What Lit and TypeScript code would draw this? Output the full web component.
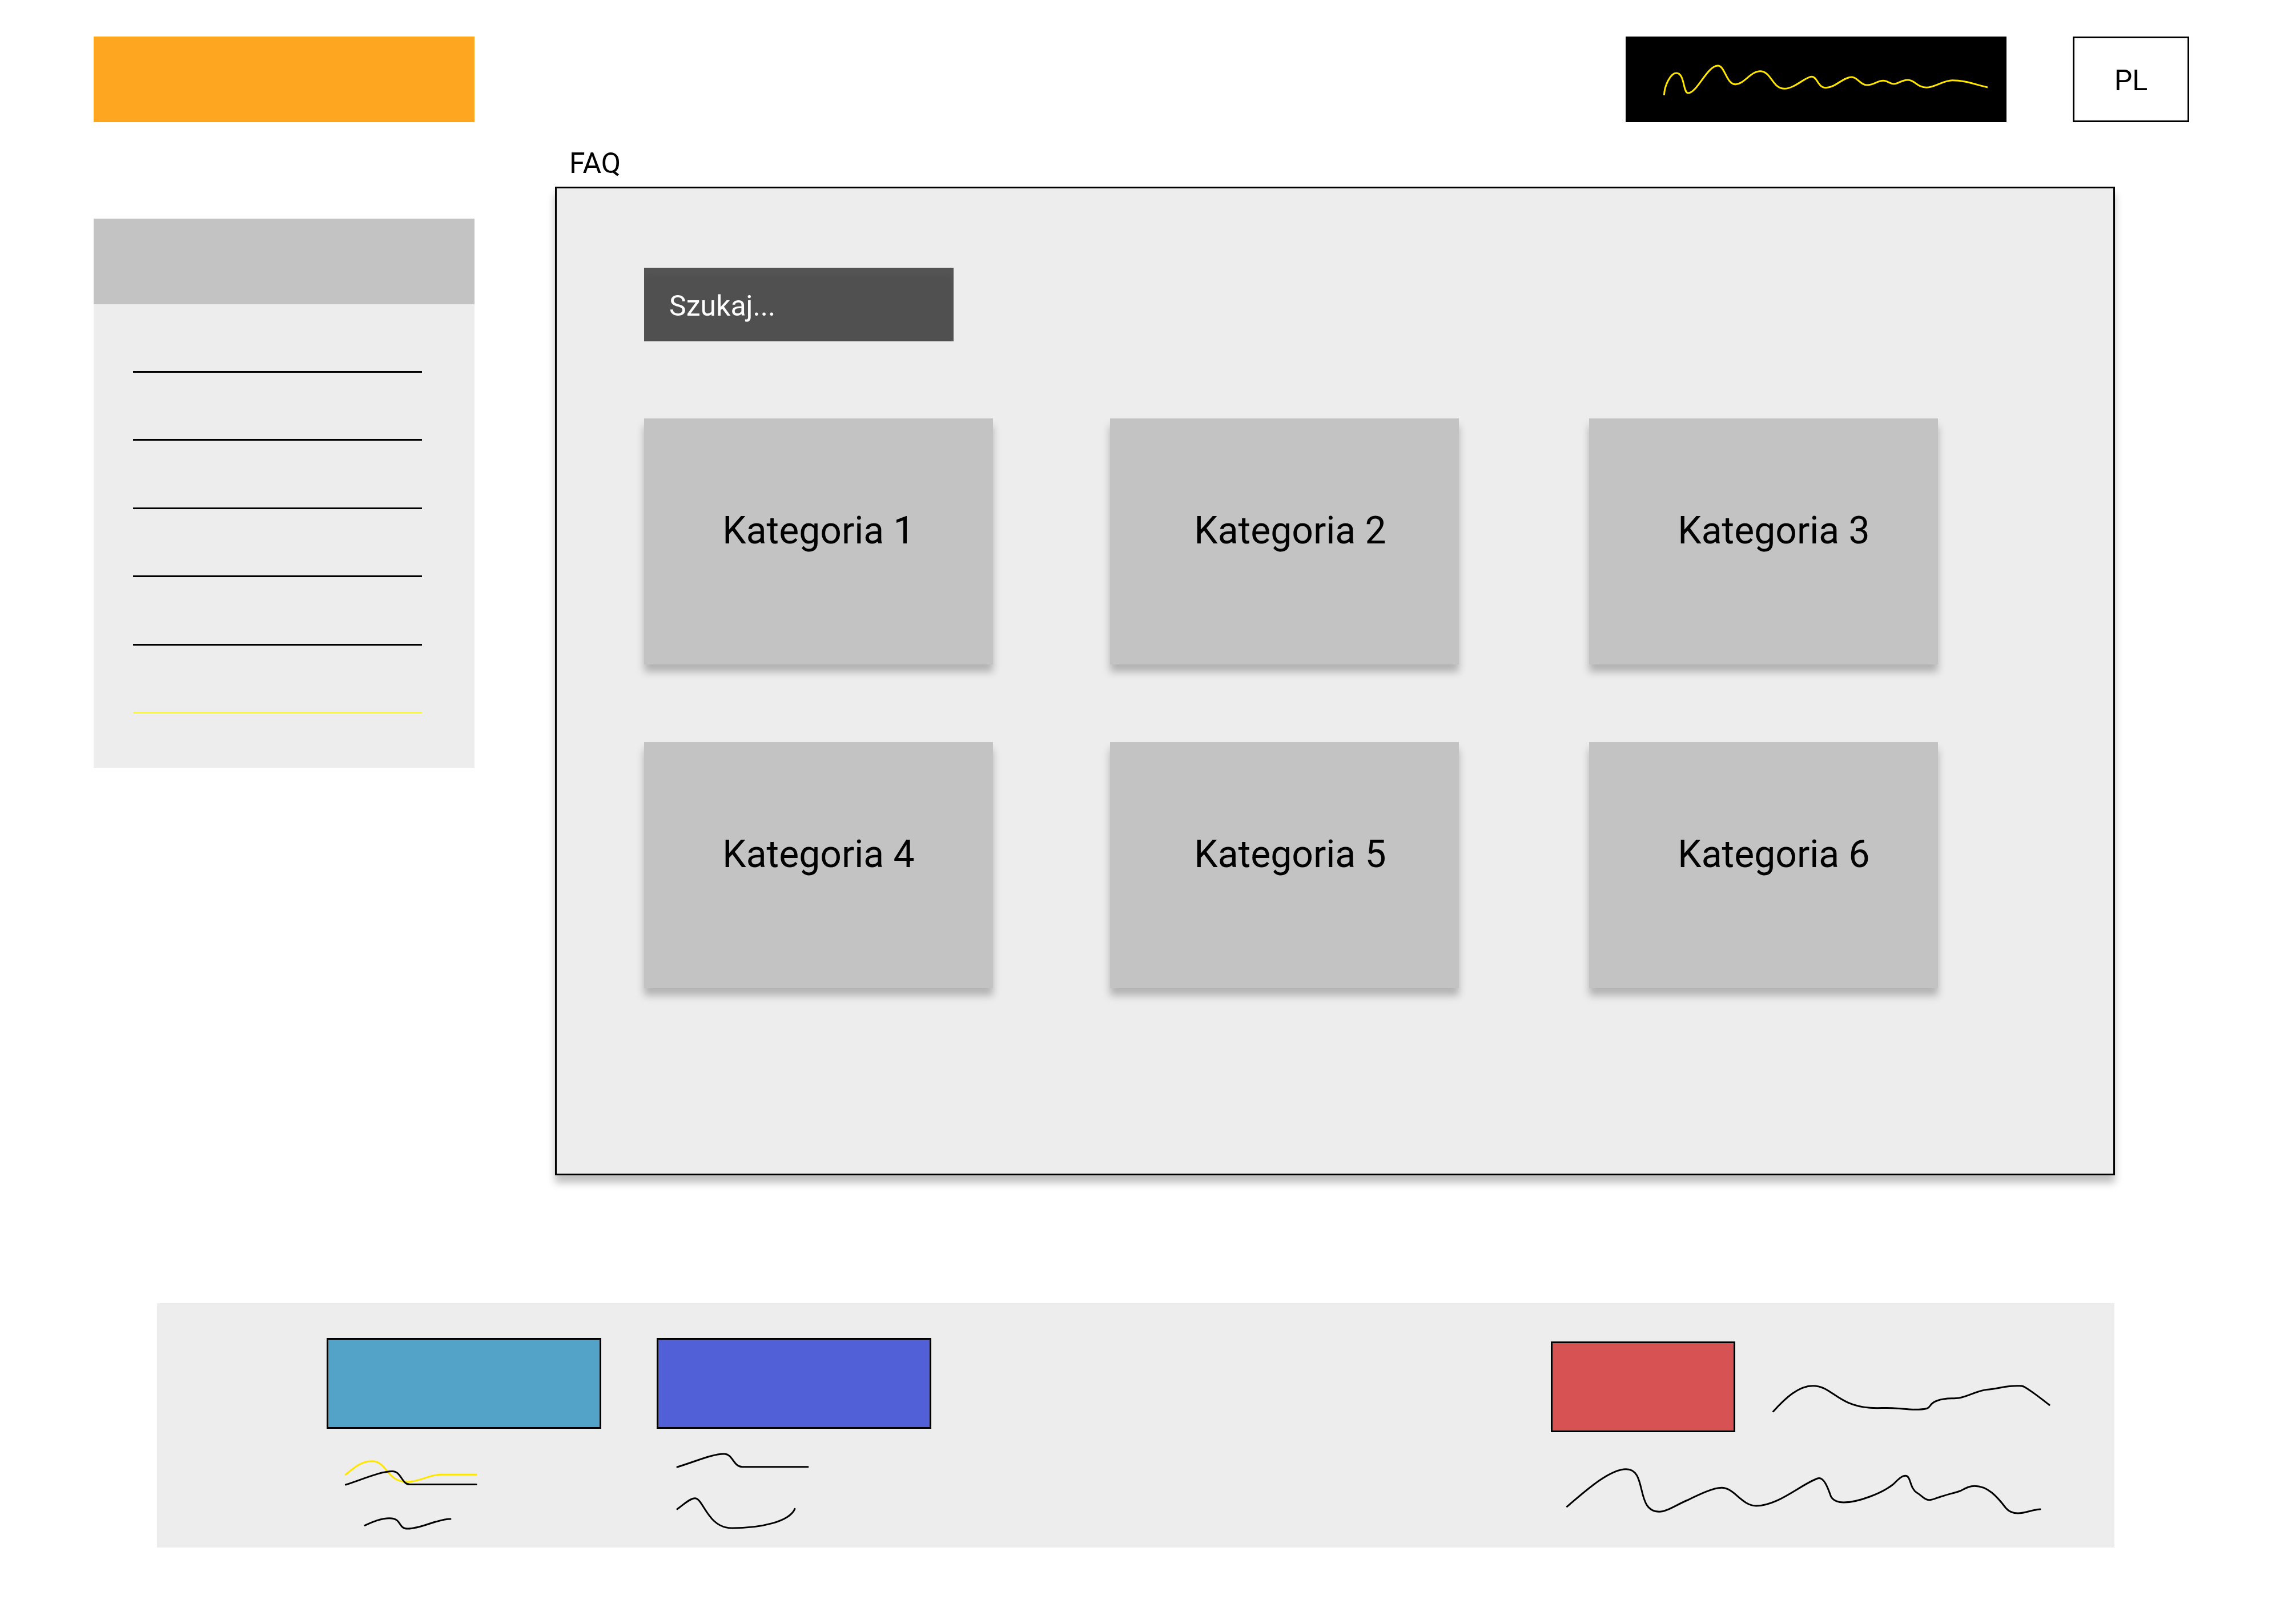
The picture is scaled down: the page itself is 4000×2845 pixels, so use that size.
import { LitElement, html, css } from "lit";
import { customElement, property } from "lit/decorators.js";

/** Top bar: brand block, account button and language switch. */
@customElement("app-header")
class AppHeader extends LitElement {
  static styles = css`
    :host {
      display: block;
    }
    .bar {
      display: flex;
      align-items: stretch;
      gap: 116px;
      height: 150px;
    }
    .brand {
      width: 667px;
      margin-right: auto;
      background: #ffa621;
    }
    .account {
      width: 667px;
      padding: 0;
      border: 0;
      background: #000;
    }
    .account svg {
      display: block;
    }
    .language {
      box-sizing: border-box;
      width: 204px;
      padding: 4px 0 0;
      border: 3px solid #000;
      border-radius: 0;
      background: #fff;
      color: #000;
      font: 400 50px/60px Roboto, sans-serif;
    }
  `;

  render() {
    return html`
      <header class="bar">
        <a class="brand" href="#" aria-label="Logo"></a>
        <button class="account" type="button" aria-label="Konto">
          <svg width="667" height="150" viewBox="0 0 667 150" fill="none" stroke="#ffe600" stroke-width="3">
            <path
              d="M67.4 102.7C68 85 79 64 88.7 64C104 64 100 99 109.6 99C125 99 143 51 161.4 51C174 51 176 83.7 192.5 83.7C207 83.7 219 60.7 235.6 60.7C255 60.7 257 91.3 278 91.3C296 91.3 315 70.3 326 70.3C336 70.3 336 89.7 351 89.7C367 89.7 381 71 396 71C406 71 411 85 423 85C434 85 441 77.3 451 77.3C459 77.3 462 83 470 83C477 83 484 76 494 76C507 76 510 89.3 527 89.3C542 89.3 556 76.7 572 76.7C594 76.7 612 84 634 89"
            />
          </svg>
        </button>
        <button class="language" type="button">PL</button>
      </header>
    `;
  }
}

/** Side menu whose entries are drawn as plain rules. */
@customElement("side-menu")
class SideMenu extends LitElement {
  static styles = css`
    :host {
      display: block;
      background: #ededed;
    }
    .title {
      height: 150px;
      background: #c3c3c3;
    }
    .list {
      display: flex;
      flex-direction: column;
      justify-content: space-between;
      height: 600px;
      margin: 0;
      padding: 117px 92px 95px 69px;
      list-style: none;
    }
    .entry {
      display: block;
      height: 3px;
      background: #000;
    }
    .active {
      background: #ffff0d;
    }
  `;

  @property({ type: Number }) count = 6;

  render() {
    const entries = Array.from({ length: this.count }, (_, i) => i + 1);
    return html`
      <nav>
        <div class="title"></div>
        <ul class="list">
          ${entries.map(
            (n) => html`<li>
              <a
                class="entry ${n === this.count ? "active" : ""}"
                href="#menu-${n}"
                aria-label="Menu ${n}"
              ></a>
            </li>`
          )}
        </ul>
      </nav>
    `;
  }
}

/** FAQ panel with the search box and the category tiles. */
@customElement("faq-panel")
class FaqPanel extends LitElement {
  static styles = css`
    :host {
      display: block;
      color: #000;
      font: 400 50px/60px Roboto, sans-serif;
    }
    .heading {
      margin: 0 0 11px;
      padding-left: 25px;
      font: inherit;
    }
    .panel {
      padding: 139px 307px 325px 153px;
      border: 3px solid #000;
      background: #ededed;
      box-shadow: 0 13px 13px rgba(0, 0, 0, 0.25);
    }
    .search {
      display: block;
      box-sizing: border-box;
      width: 542px;
      height: 129px;
      margin: 0 0 135px;
      padding: 4px 44px 0;
      border: 0;
      border-radius: 0;
      background: #505050;
      box-shadow: inset 0 13px 13px rgba(255, 255, 255, 0.03);
      color: #fff;
      font: inherit;
    }
    .search::placeholder {
      color: #fff;
      opacity: 1;
    }
    .tiles {
      display: grid;
      grid-template-columns: 611fr 205fr 611fr 228fr 611fr;
      row-gap: 136px;
    }
    .tile {
      display: flex;
      align-items: center;
      justify-content: center;
      box-sizing: border-box;
      height: 431px;
      padding-bottom: 38px;
      background: #c3c3c3;
      box-shadow: 0 13px 13px rgba(0, 0, 0, 0.25);
      color: #000;
      font-size: 66px;
      line-height: 80px;
      text-decoration: none;
    }
    .first {
      grid-column: 1;
    }
    .second {
      grid-column: 3;
      padding-left: 20px;
    }
    .third {
      grid-column: 5;
      padding-left: 36px;
    }
  `;

  @property({ attribute: false }) categories: string[] = [];

  render() {
    const columns = ["first", "second", "third"];
    return html`
      <section>
        <h1 class="heading">FAQ</h1>
        <div class="panel">
          <input class="search" type="search" placeholder="Szukaj..." aria-label="Szukaj" />
          <div class="tiles">
            ${this.categories.map(
              (name, i) => html`<a class="tile ${columns[i % 3]}" href="#kategoria-${i + 1}">${name}</a>`
            )}
          </div>
        </div>
      </section>
    `;
  }
}

/** Footer: two link columns on the left, contact block on the right. */
@customElement("app-footer")
class AppFooter extends LitElement {
  static styles = css`
    :host {
      display: block;
    }
    .footer {
      display: flex;
      align-items: flex-start;
      gap: 97px;
      padding: 61px 111px 0 297px;
      background: #ededed;
    }
    .column {
      width: 481px;
    }
    .contact {
      width: 876px;
      margin-left: auto;
      padding-top: 6px;
    }
    .row {
      display: flex;
    }
    .box {
      box-sizing: border-box;
      height: 159px;
      border: 3px solid #000;
    }
    .teal {
      background: #53a2c8;
    }
    .indigo {
      background: #5160d7;
    }
    .red {
      width: 323px;
      background: #d75253;
    }
    svg {
      display: block;
      fill: none;
      stroke: #000;
      stroke-width: 3px;
      stroke-linecap: round;
    }
    .accent {
      stroke: #ffe600;
    }
  `;

  render() {
    return html`
      <footer class="footer">
        <div class="column">
          <div class="box teal"></div>
          <svg width="481" height="208" viewBox="0 0 481 208">
            <path
              class="accent"
              d="M33.4 80.3C48 68 61 56.7 79 56.7C107 56.7 104 93 141 93C163 93 180 80.3 200 80.3H262"
            />
            <path d="M33.4 98C62 89 94 74.5 115 74.5C131 74.5 131 97.5 146 97.5H262" />
            <path d="M67 169.3C81 163 95 156.7 110 156.7C133 156.7 124 175 142 175C166 175 193 158 217 158" />
          </svg>
        </div>
        <div class="column">
          <div class="box indigo"></div>
          <svg width="481" height="208" viewBox="0 0 481 208">
            <path d="M36 67C65 58.5 97 44 118 44C134 44 134 66.7 150 66.7H265" />
            <path d="M36 140.7C46 134 58 121.7 67 121.7C82 121.7 89 174 132 174C182 174 232 163 242 140.3" />
          </svg>
        </div>
        <div class="contact">
          <div class="row">
            <div class="box red"></div>
            <svg width="553" height="159" viewBox="0 0 553 159">
              <path
                d="M66.5 122.7C88 99 111 77.7 136 77.7C169 77.7 178 112 236 116.3C249 117.3 262 116 275 116.7C289 117.3 302 119.3 314 119.3C352 119.3 332 112 353 104C369 98 380 101 392 99C409 96 423 86.5 440 84.5C463 82.5 472 77.7 494 77.7C501 77.7 502 77 507 80C522 89 537 101 550 111.3"
              />
            </svg>
          </div>
          <svg width="876" height="202" viewBox="0 0 876 202">
            <path
              d="M28.4 130.3C58 105 102 64.7 132 64.7C170 64.7 147 139.3 190 139.3C203 139.3 218 128 239.5 119C258 110 284 97.3 299 97.3C322 97.3 334 129 359.4 129C398 129 437 92 467 81C478 77 485 97 490.6 112.7C494 120 504 123 513 123C538 123 580 107 600 91C607 84 614 76.3 621 76.3C631 76.3 628 98 641 106C650 111 654 118.7 663 118.7C670 118.7 677 114 687 111.7C698 108 709 106 718 102.5C727 98 732 94.3 742 94.3C765 94.3 781 112 797 133C803 140 810 142 818 142C832 142 843 135.5 857 135"
            />
          </svg>
        </div>
      </footer>
    `;
  }
}

@customElement("app-root")
class AppRoot extends LitElement {
  static styles = css`
    :host {
      display: block;
      min-height: 100vh;
      background: #fff;
    }
    .page {
      display: flex;
      flex-direction: column;
      padding: 64px 0 134px;
    }
    .top {
      margin: 0 166px 42px 164px;
    }
    .main {
      display: flex;
      align-items: flex-start;
      gap: 141px;
      margin: 0 296px 224px 164px;
    }
    .side {
      flex: none;
      width: 667px;
      margin-top: 127px;
    }
    .content {
      flex: 1;
      min-width: 0;
    }
    .bottom {
      margin: 0 297px 0 275px;
    }
  `;

  render() {
    const categories = [1, 2, 3, 4, 5, 6].map((n) => `Kategoria ${n}`);
    return html`
      <div class="page">
        <app-header class="top"></app-header>
        <main class="main">
          <side-menu class="side" .count=${6}></side-menu>
          <faq-panel class="content" .categories=${categories}></faq-panel>
        </main>
        <app-footer class="bottom"></app-footer>
      </div>
    `;
  }
}
